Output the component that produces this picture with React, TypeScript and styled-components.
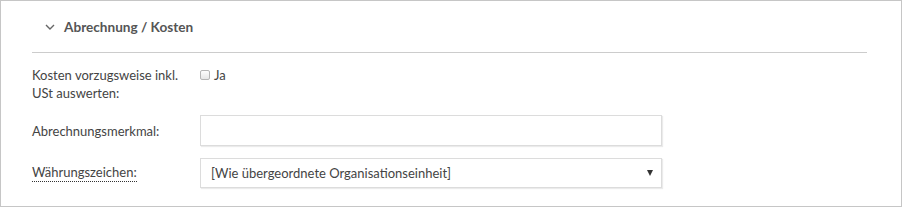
import React, { useState } from 'react';
import styled, { createGlobalStyle } from 'styled-components';

const GlobalStyle = createGlobalStyle`
  html, body {
    margin: 0;
    padding: 0;
    background: #ffffff;
  }
  body {
    font-family: Lato, 'Liberation Sans', sans-serif;
    font-size: 13px;
    color: #444;
  }
`;

const Panel = styled.div`
  box-sizing: border-box;
  width: 902px;
  height: 207px;
  border: 1px solid #c6c6c6;
  background: #fff;
  padding: 0 34px 0 31px;
`;

const Header = styled.div`
  display: flex;
  align-items: center;
  height: 50px;
  padding-left: 13px;
  gap: 9px;
  border-bottom: 1px solid #cccccc;
  padding-top: 1px;
`;

const Title = styled.h3`
  margin: 0;
  font-size: 13.6px;
  font-weight: 700;
  color: #555;
`;

const Body = styled.div`
  display: flex;
  flex-direction: column;
  padding-top: 13px;
`;

const Row = styled.div<{ $gap?: number }>`
  display: grid;
  grid-template-columns: 168px 462px;
  align-items: center;
  margin-bottom: ${(p) => p.$gap ?? 0}px;
`;

const Label = styled.label<{ $help?: boolean }>`
  color: #444;
  line-height: 18px;
  justify-self: start;
  ${(p) =>
    p.$help &&
    `
    border-bottom: 1px dotted #333;
    line-height: 17px;
    cursor: help;
  `}
`;

const CheckRow = styled.label`
  display: flex;
  align-items: center;
  gap: 4px;
  align-self: start;
  line-height: 18px;
  color: #444;
`;

const Box = styled.span`
  box-sizing: border-box;
  width: 10px;
  height: 10px;
  border: 1px solid #b5b5b5;
  border-radius: 2px;
  background: linear-gradient(#fdfdfd, #e6e6e6);
`;

const TextInput = styled.input`
  box-sizing: border-box;
  width: 462px;
  height: 31px;
  border: 1px solid #dcdcdc;
  box-shadow: 1px 1px 1px rgba(0, 0, 0, 0.08);
  padding: 0 9px;
  font: inherit;
  outline: none;
`;

const SelectBox = styled.div`
  box-sizing: border-box;
  width: 462px;
  height: 30px;
  border: 1px solid #dcdcdc;
  box-shadow: 1px 1px 1px rgba(0, 0, 0, 0.08);
  padding: 0 8px 0 10px;
  display: flex;
  align-items: center;
  justify-content: space-between;
  color: #444;
`;

const Arrow = styled.span`
  width: 0;
  height: 0;
  border-left: 3px solid transparent;
  border-right: 3px solid transparent;
  border-top: 6px solid #333;
`;

const App: React.FC = () => {
  const [value, setValue] = useState('');

  return (
    <>
      <GlobalStyle />
      <Panel>
        <Header>
          <svg width="10" height="6" viewBox="0 0 10 6">
            <path d="M1 1l4 4 4-4" fill="none" stroke="#666" strokeWidth="1.4" />
          </svg>
          <Title>Abrechnung / Kosten</Title>
        </Header>
        <Body>
          <Row $gap={13}>
            <Label>
              Kosten vorzugsweise inkl.
              <br />
              USt auswerten:
            </Label>
            <CheckRow>
              <Box />
              Ja
            </CheckRow>
          </Row>
          <Row $gap={12}>
            <Label>Abrechnungsmerkmal:</Label>
            <TextInput value={value} onChange={(e) => setValue(e.target.value)} />
          </Row>
          <Row>
            <Label $help>Währungszeichen:</Label>
            <SelectBox>
              [Wie übergeordnete Organisationseinheit]
              <Arrow />
            </SelectBox>
          </Row>
        </Body>
      </Panel>
    </>
  );
};

export default App;
